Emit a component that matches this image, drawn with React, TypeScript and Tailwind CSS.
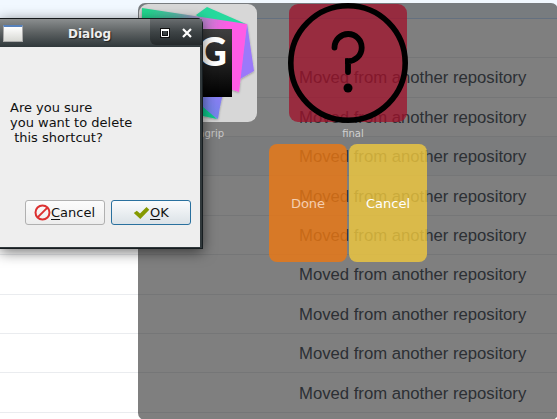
import React from "react";

const rows = [
  { height: "h-[39px]", text: false, tint: "bg-white" },
  { height: "h-[40px]", text: true, tint: "bg-white" },
  { height: "h-[39px]", text: true, tint: "bg-white" },
  { height: "h-[39px]", text: true, tint: "bg-[#f6f8fa]" },
  { height: "h-[40px] pt-[2px]", text: true, tint: "bg-white" },
  { height: "h-[39px]", text: true, tint: "bg-white" },
  { height: "h-[40px]", text: true, tint: "bg-white" },
  { height: "h-[39px]", text: true, tint: "bg-white" },
  { height: "h-[39px]", text: true, tint: "bg-white" },
  { height: "h-[40px] pt-[2px]", text: true, tint: "bg-white" },
  { height: "h-[39px]", text: false, tint: "bg-white" },
];

function FileList() {
  return (
    <div className="font-['Liberation_Sans',sans-serif] text-[16.7px] text-[#586069]">
      <div className="h-[19px] border-b border-[#c8e1ff] bg-[#f1f8ff]" />
      {rows.map((row, i) => (
        <div key={i} className={`flex items-center border-b border-[#eaecef] pl-[299px] ${row.height} ${row.tint}`}>
          {row.text && <span className="whitespace-nowrap leading-[17px]">Moved from another repository</span>}
        </div>
      ))}
    </div>
  );
}

function DatabaseLogo() {
  return (
    <svg className="block" width="118" height="118" viewBox="139 4 118 118">
      <defs>
        <linearGradient id="band" gradientUnits="userSpaceOnUse" x1="145" y1="18" x2="224" y2="40">
          <stop offset="0" stopColor="#22d88f" />
          <stop offset=".35" stopColor="#55b9a6" />
          <stop offset=".65" stopColor="#b08acb" />
          <stop offset="1" stopColor="#ff5be6" />
        </linearGradient>
        <linearGradient id="low" x1="0" y1="1" x2="1" y2="0">
          <stop offset="0" stopColor="#5b8ce0" />
          <stop offset="1" stopColor="#9b79fa" />
        </linearGradient>
        <linearGradient id="plate" x1="0" y1="0" x2="0" y2="1">
          <stop offset="0" stopColor="#404040" />
          <stop offset="1" stopColor="#000" />
        </linearGradient>
        <filter id="soft" x="-20%" y="-20%" width="140%" height="140%">
          <feDropShadow dx="0" dy="1" stdDeviation="1.2" floodOpacity=".3" />
        </filter>
      </defs>
      <g filter="url(#soft)">
        <path d="M207 7 246 24 207 24 196 15Z" fill="#25d99d" />
        <path d="M247 23 254 71 240 79Z" fill="#9b79fa" />
        <path d="M190 85H226Q221 98 218 119Q207 113 199 103Z" fill="url(#low)" />
        <path d="M199 103 203 107 217 119 203 116Z" fill="#0bc88b" />
        <path d="M142 8 247 24 239 92 230 89 142 85Z" fill="url(#band)" />
      </g>
      <path d="M164 29H232V97H164Z" fill="url(#plate)" />
      <text x="198" y="66" fill="#fff" className="font-['Lato',sans-serif] text-[40px] font-black">G</text>
    </svg>
  );
}

function QuestionIcon() {
  return (
    <svg className="block overflow-visible" width="118" height="118" viewBox="289 4 118 118" fill="none" stroke="#000" strokeWidth="5.6" strokeLinecap="round">
      <circle cx="348" cy="63" r="57.2" />
      <path d="M334.5 47.5A13.6 13.6 0 1 1 348 61.2V72" strokeWidth="5.8" />
      <path d="M345.1 64V60Q345.1 58.3 348 58.3V64Z" fill="#000" stroke="none" />
      <circle cx="348" cy="88" r="4.5" fill="#000" stroke="none" />
    </svg>
  );
}

function ShortcutGrid() {
  return (
    <div className="absolute left-[138px] top-[3px] h-[417px] w-[420px] rounded-[7px] bg-black/50 p-px font-['DejaVu_Sans',sans-serif]">
      <div className="flex gap-[32px]">
        <div className="w-[118px]">
          <div className="h-[118px] overflow-hidden rounded-[9px] bg-[#d7d7d7]"><DatabaseLogo /></div>
          <div className="mt-[5px] pl-[10px] text-center text-[10px] leading-[14px] text-[#c7c7c7]">datagrip</div>
        </div>
        <div className="w-[118px]">
          <div className="h-[118px] rounded-[9px] bg-[#a01029]/75"><QuestionIcon /></div>
          <div className="mt-[5px] pl-[10px] text-center text-[10px] leading-[14px] text-[#d0d0d0]">final</div>
        </div>
      </div>
      <div className="mt-[3px] flex gap-[2px] pl-[130px] text-[13px]">
        <div className="flex h-[118px] w-[78px] items-center justify-center rounded-[8px] bg-[#ed7811]/80 pt-px text-[#f4ceb0]">Done</div>
        <div className="flex h-[118px] w-[78px] items-center justify-center rounded-[8px] bg-[#f1c93d]/80 pt-px text-white">Cancel</div>
      </div>
    </div>
  );
}

function TitleBar() {
  return (
    <div className="flex h-[29px] rounded-tr-[5px] border-t border-[#15191b] bg-gradient-to-b from-[#8b8e8f] via-[#5b6061] to-[#30383b]">
      <div className="flex w-[150px] items-center">
        <div className="ml-[3px] mt-px h-[17px] w-[20px] border border-[#aaa] border-t-2 border-t-[#5681bc] bg-gradient-to-b from-white to-[#d8d9d4]" />
        <span className="ml-[45px] mt-[2px] text-[12px] font-bold leading-none text-[#eee] [text-shadow:1px_1px_1px_#222]">Dialog</span>
      </div>
      <div className="flex h-[26px] w-[52px] items-center rounded-bl-[6px] bg-gradient-to-b from-[#696d6f] via-[#3e4446] to-[#24292b]">
        <svg className="block" width="52" height="26" viewBox="150 19 52 26" fill="none" stroke="#fff">
          <path d="M161.5 29.5h7v7h-7z" stroke="#111" strokeWidth="3" />
          <path d="M161.5 29.5h7v7h-7z" />
          <path d="M161 30h8" strokeWidth="2" />
          <path d="m183 29 8 8m0-8-8 8" strokeWidth="2.2" />
        </svg>
      </div>
    </div>
  );
}

function ConfirmDialog() {
  return (
    <div className="absolute left-0 top-[18px] w-[203px] rounded-tr-[6px] border-r border-b border-[#171d20] bg-[#30383b] pb-[1px] font-['DejaVu_Sans',sans-serif] text-[#111] shadow-[0_3px_14px_rgba(0,0,0,0.55)]">
      <TitleBar />
      <div className="flex h-[200px] w-[200px] flex-col bg-[#eee]">
        <p className="mt-[53px] whitespace-pre pl-[10px] text-[13px] leading-[15px]">{"Are you sure\nyou want to delete\n this shortcut?"}</p>
        <div className="mt-[55px] flex gap-[6px] pl-[25px] text-[13px] leading-none">
          <div className="flex h-[25px] w-[80px] items-center rounded-[3px] border border-[#b0b0b0] bg-gradient-to-b from-[#fcfcfc] to-[#ededed] pl-[8px]">
            <svg className="block shrink-0" width="17" height="17" viewBox="0 0 17 17" fill="none" stroke="#dc3030" strokeWidth="2">
              <circle cx="8.5" cy="8.5" r="7" /><path d="m13.4 3.6-9.8 9.8" />
            </svg>
            <span><span className="underline decoration-1 underline-offset-[2px]">C</span>ancel</span>
          </div>
          <div className="flex h-[25px] w-[80px] items-center rounded-[3px] border border-[#29709e] bg-gradient-to-b from-[#fafbfc] to-[#dbe2e7] pl-[21px]">
            <svg className="block shrink-0" width="17" height="16" viewBox="0 0 17 16"><path d="m.8 8 3-2.3 3.2 2.8L13.5 2l2.8 2.8L7.3 14Z" fill="#849900" /></svg>
            <span><span className="underline decoration-1 underline-offset-[2px]">O</span>K</span>
          </div>
        </div>
      </div>
    </div>
  );
}

export default function App() {
  return (
    <div className="relative h-[419px] w-[557px] overflow-hidden bg-white">
      <FileList />
      <ShortcutGrid />
      <ConfirmDialog />
    </div>
  );
}
